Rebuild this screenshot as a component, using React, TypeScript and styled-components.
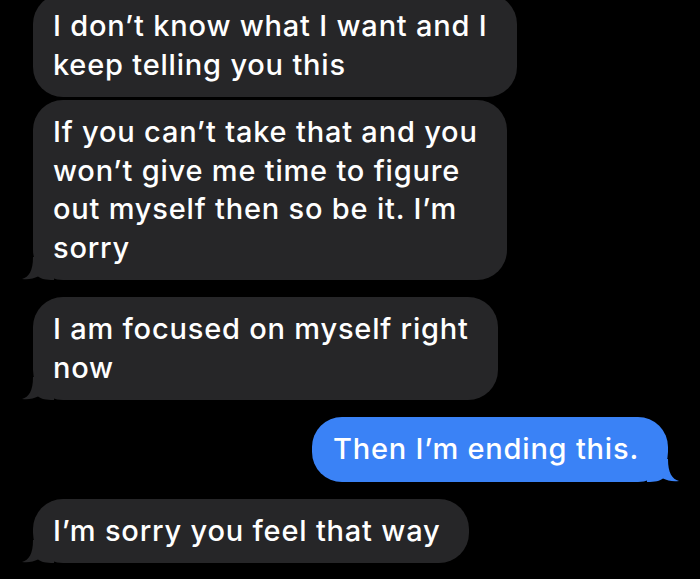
import styled, { createGlobalStyle } from 'styled-components';

const GlobalStyle = createGlobalStyle`
    html, body {
        margin: 0;
        padding: 0;
        background: #000;
        overflow: hidden;
    }
`;

const Thread = styled.div`
    width: 700px;
    height: 579px;
    overflow: hidden;
    background: #000;
    display: flex;
    flex-direction: column;
    font-family: Inter, "Liberation Sans", sans-serif;
`;

const List = styled.div`
    display: flex;
    flex-direction: column;
    margin-top: -6px;
    padding: 0 32px 0 33px;
`;

const Row = styled.div<{ $fromMe?: boolean; $gap: number }>`
    display: flex;
    justify-content: ${(p) => (p.$fromMe ? 'flex-end' : 'flex-start')};
    margin-bottom: ${(p) => p.$gap}px;
`;

const Bubble = styled.div<{ $fromMe?: boolean }>`
    position: relative;
    background: ${(p) => (p.$fromMe ? '#3a82f6' : '#262628')};
    color: #fff;
    border-radius: 30px;
    padding: ${(p) => (p.$fromMe ? '13px 29px 13px 21px' : '13px 29px 13px 20px')};
    font-size: 29px;
    font-weight: 500;
    line-height: 38.5px;
    letter-spacing: 0.8px;
    white-space: nowrap;
`;

const TailSvg = styled.svg<{ $fromMe?: boolean }>`
    position: absolute;
    bottom: 0;
    width: 32px;
    height: 24px;
    ${(p) => (p.$fromMe ? 'right: -11px; transform: scaleX(-1);' : 'left: -11px;')}
`;

const Tail = ({ fromMe, color }: { fromMe?: boolean; color: string }) => (
    <TailSvg $fromMe={fromMe} viewBox="0 0 32 24">
        <path
            d="M11 1 C11 15 7 21 0 23 C6 24 12 22.5 16 20.5 C19 23 24 24 32 24 L32 1 Z"
            fill={color}
        />
    </TailSvg>
);

const messages = [
    { lines: ['I don’t know what I want and I', 'keep telling you this'], tail: false },
    {
        lines: ['If you can’t take that and you', 'won’t give me time to figure', 'out myself then so be it. I’m', 'sorry'],
        tail: true,
    },
    { lines: ['I am focused on myself right', 'now'], tail: true },
    { lines: ['Then I’m ending this.'], tail: true, fromMe: true },
    { lines: ['I’m sorry you feel that way'], tail: true },
];

const App = () => {
    return (
        <>
            <GlobalStyle />
            <Thread>
                <List>
                    {messages.map((m, i) => (
                        <Row key={i} $fromMe={m.fromMe} $gap={m.tail ? 17 : 3}>
                            <Bubble $fromMe={m.fromMe}>
                                {m.lines.map((line, j) => (
                                    <div key={j}>{line}</div>
                                ))}
                                {m.tail && <Tail fromMe={m.fromMe} color={m.fromMe ? '#3a82f6' : '#262628'} />}
                            </Bubble>
                        </Row>
                    ))}
                </List>
            </Thread>
        </>
    );
};

export default App;
